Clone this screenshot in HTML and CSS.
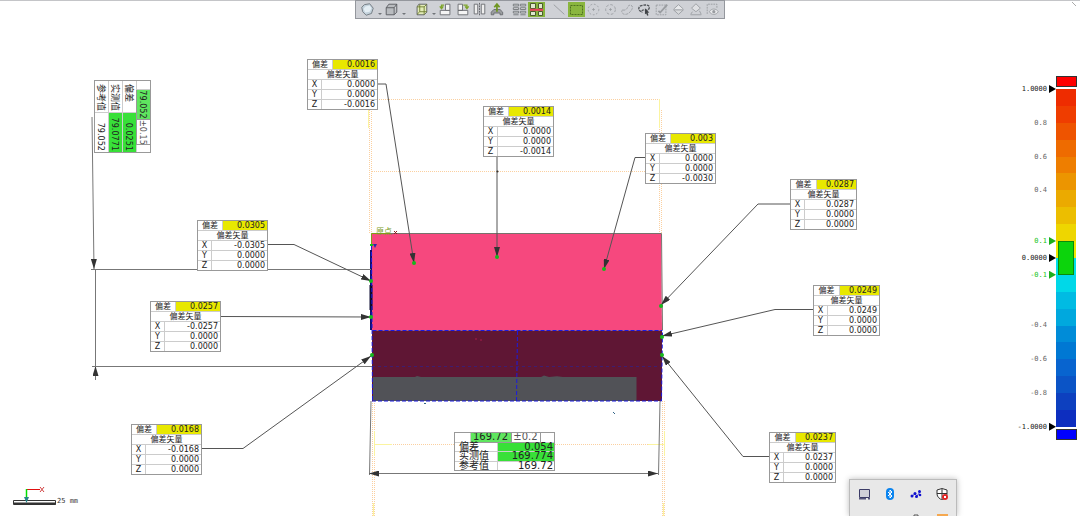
FILE: index.html
```
<!DOCTYPE html>
<html lang="zh-CN">
<head>
<meta charset="utf-8">
<title>偏差检测</title>
<link rel="stylesheet" href="styles.css">
</head>
<body>
<div class="app">
  <header class="toolbar" role="toolbar" aria-label="视图工具">
    <div class="group">
      <button class="tool" aria-label="着色"><svg viewBox="0 0 17 17"><path d="M5 3l6-1 4 5-2 6-6 2-4-4-1-5z" fill="#c3d2dc" stroke="#6d757c"/><path d="M6 5l5-1 2 3-2 4-5 1-2-4z" fill="#e4eef4"/></svg></button>
      <button class="drop" aria-label="着色选项"></button>
      <button class="tool" aria-label="视图"><svg viewBox="0 0 17 17"><path d="M2.500 6.500h9v8h-9zM2.500 6.500l3-4h9l-3 4M14.500 2.500v9l-3 3" fill="#b9bcc0" stroke="#55585c"/></svg></button>
      <button class="drop" aria-label="视图选项"></button>
    </div>
    <div class="group">
      <button class="tool" aria-label="剖切"><svg viewBox="0 0 17 17"><path d="M3.500 5.500l2-3h9v9l-3 3h-8z" fill="#e3ecb8" stroke="#55585c"/><path d="M3.500 5.500h8v9M11.500 5.500l3-3M6.500 3v8h8M6.500 11l-3 3" fill="none" stroke="#6a7a2c"/></svg></button>
      <button class="drop" aria-label="剖切选项"></button>
      <button class="tool" aria-label="左转"><svg viewBox="0 0 17 17"><path d="M2.500 9.500h11v5h-11z" fill="#f4f4f4" stroke="#66696d"/><path d="M8.500 2.500h5v7h-5z" fill="#f4f4f4" stroke="#66696d"/><path d="M7 3.500H4V7M2 5l2 2.500L6 5" fill="none" stroke="#7fa52b" stroke-width="1.500"/></svg></button>
      <button class="tool" aria-label="右转"><svg viewBox="0 0 17 17"><path d="M3.500 2.500h5v7h-5zM3.500 9.500h11v5h-11z" fill="#f4f4f4" stroke="#66696d"/><path d="M9.500 3.500h4V7M11.500 5l2 2.500L15.500 5" fill="none" stroke="#7fa52b" stroke-width="1.500"/></svg></button>
      <button class="tool" aria-label="镜像"><svg viewBox="0 0 17 17"><path d="M2.500 2.500h4v11h-4zM10.500 2.500h4v11h-4z" fill="#eee" stroke="#66696d"/><path d="M8.500 1v14" stroke="#55585c" stroke-dasharray="2 1"/></svg></button>
      <button class="tool" aria-label="投影"><svg viewBox="0 0 17 17"><path d="M2.500 14.500v-3l3-3h7l3 3v3h-3v-2h-7v2z" fill="#9a9da0" stroke="#66696d"/><path d="M9 11V3M6 6l3-3.500L12 6" fill="none" stroke="#6f9623" stroke-width="2"/></svg></button>
    </div>
    <div class="group">
      <button class="tool" aria-label="列表"><svg viewBox="0 0 17 17"><path d="M1.500 2.500h6v2h-6zM9.500 2.500h6v2h-6zM1.500 6.500h6v2h-6zM9.500 6.500h6v2h-6zM1.500 10.500h6v2h-6zM9.500 10.500h6v2h-6zM1.500 14.500h6M9.500 14.500h6" fill="#d9dadd" stroke="#707478"/></svg></button>
      <button class="tool" aria-label="对比" aria-pressed="true"><svg viewBox="0 0 17 17"><path d="M0 1h17v15H0z" fill="#86b43c"/><path d="M2.500 2.500h5v5h-5zM10.500 2.500h4v5h-4zM2.500 10.500h5v4h-5zM10.500 10.500h4v4h-4z" fill="#dfe8cd" stroke="#4c5d2d"/><path d="M2 8.800h13" stroke="#e8405c" stroke-width="2"/></svg></button>
    </div>
    <div class="group">
      <button class="tool" aria-label="直线选择"><svg viewBox="0 0 17 17"><path d="M2 3l12 11" stroke="#96999d"/></svg></button>
      <button class="tool" aria-label="矩形选择" aria-pressed="true"><svg viewBox="0 0 17 17"><path d="M0 1h17v15H0z" fill="#8ab63f"/><path d="M2.500 4.500h12v9h-12z" fill="none" stroke="#4f7120" stroke-dasharray="2 1"/></svg></button>
      <button class="tool" aria-label="圆形选择"><svg viewBox="0 0 17 17"><circle cx="8.500" cy="8.500" r="6" fill="none" stroke="#999ca0" stroke-dasharray="2 2"/><path d="M7 8.500h3M8.500 7v3" stroke="#999ca0"/></svg></button>
      <button class="tool" aria-label="椭圆选择"><svg viewBox="0 0 17 17"><circle cx="8.500" cy="8.500" r="5.500" fill="none" stroke="#999ca0" stroke-dasharray="3 2"/><path d="M7 8.500h3M8.500 7v3" stroke="#999ca0"/></svg></button>
      <button class="tool" aria-label="自由选择"><svg viewBox="0 0 17 17"><path d="M3 9c3 1 5-1 6-4 2-3 6-1 5 2s-4 7-8 7-5-4-3-5z" fill="none" stroke="#999ca0" stroke-dasharray="3 1"/></svg></button>
      <button class="tool" aria-label="套索"><svg viewBox="0 0 17 17"><path d="M5 11c-4-1-4-6 0-7s9-1 9 2-3 4-6 3c-2 0-3 1-2 3" fill="none" stroke="#505357" stroke-width="1.500" stroke-dasharray="3 1"/><path d="M9 7l5 5-2 .3 1 2.700-1.500.5-1-2.500L9 14z" fill="#404347"/></svg></button>
      <button class="tool" aria-label="画笔"><svg viewBox="0 0 17 17"><path d="M2.500 3.500h11v11h-11z" fill="none" stroke="#999ca0" stroke-dasharray="2 1"/><path d="M5 10l2 2 8-9" fill="none" stroke="#999ca0" stroke-width="2"/></svg></button>
      <button class="tool" aria-label="填充"><svg viewBox="0 0 17 17"><path d="M3 8l5.500-5L14 8" fill="#e8e9eb" stroke="#999ca0"/><path d="M3 9h11l-5.500 5z" fill="#d8dadc" stroke="#999ca0"/></svg></button>
      <button class="tool" aria-label="擦除"><svg viewBox="0 0 17 17"><path d="M4 7l5-5 5 5-5 4zM3 14.500h12M5 11l-2 3M13 10l2 4" fill="#dfe0e3" stroke="#999ca0"/></svg></button>
      <button class="tool" aria-label="可见性"><svg viewBox="0 0 17 17"><path d="M2.500 13.500v-11h11v4" fill="none" stroke="#999ca0" stroke-dasharray="2 1"/><path d="M5 11c2-4 8-4 10 0-2 4-8 4-10 0z" fill="#e8e9eb" stroke="#999ca0"/><circle cx="10" cy="11" r="1.800" fill="#999ca0"/></svg></button>
    </div>
  </header>

  <main class="stage">
    <svg class="scene" width="1080" height="516" viewBox="0 0 1080 516" role="img" aria-label="零件与标注引线">
      <defs>
        <marker id="tip" viewBox="0 0 10 6" refX="10" refY="3" markerWidth="10" markerHeight="6" markerUnits="userSpaceOnUse" orient="auto-start-reverse"><path d="M0 0L10 3L0 6z" fill="#333"/></marker>
      </defs>
      <g class="guides">
        <path d="M377 99.500H660M372 171.500H645M369.500 110V233M371.500 99V233M659.500 99V233M661.500 110V233M372.500 401V516M374.500 401V516M662.500 401V516M664.500 401V516M375 444.500H664"/>
        <path class="solid" d="M368.500 104V128M659.500 99V128M374.500 431V456M375 444.500H392M648 444.500H664M664.500 431V456M373.500 503V516M663.500 503V516"/>
      </g>
      <path d="M372 233.500H661L662 330.500H372z" fill="#f6487e"/>
      <path d="M372 330.500H662V401H372z" fill="#5f1634"/>
      <path d="M373 377H415l2-1 4 1H541l3-1.500 5 1.500 8-.8 6 .8H636.500V401H373z" fill="#515257"/>
      <path d="M371.500 233.500H661.500L662.500 330" fill="none" stroke="#77716c"/>
      <path d="M371 250V330" stroke="#101070" stroke-width="2"/>
      <path d="M371 285V310" stroke="#0a0a30" stroke-width="3"/>
      <path d="M372.500 330.500H662.500M371.500 240L372.500 401M372 401H661.500L662.500 331M517.500 331L516.500 401" fill="none" stroke="#1a1ae0" stroke-dasharray="4 2"/>
      <path d="M372 366.500H662" stroke="#31208a" stroke-dasharray="3 3" opacity=".7"/>
      <path d="M475 339h2M480 340h2" stroke="#a81c4a"/>
      <path d="M424 403.500h2M613 412l2 2" stroke="#368"/>
      <g class="dims">
        <path d="M92 117L94 269" marker-end="url(#tip)"/>
        <path d="M95.500 269V366"/>
        <path d="M95.500 380V366" marker-end="url(#tip)"/>
        <path d="M91 269.500H371M92 366.500H372"/>
        <path d="M371 401L369.500 475M660 401L658.500 475"/>
        <path d="M369 473.500H658" marker-start="url(#tip)" marker-end="url(#tip)"/>
      </g>
      <g class="leaders">
        <path d="M377 84H386L414 263"/>
        <path d="M497 155V257"/>
        <path d="M645 157.500H635L604 269"/>
        <path d="M790 204H758L661 305"/>
        <path d="M813 309.500H775L662 336"/>
        <path d="M769 456.500H743L662 356"/>
        <path d="M267 244.500H294L371 281"/>
        <path d="M220 316.500L371 317"/>
        <path d="M201 448.500H243L371 356"/>
      </g>
      <g fill="#17b81c">
        <circle cx="414" cy="263" r="2"/><circle cx="497" cy="257" r="2"/><circle cx="604" cy="269" r="2"/>
        <circle cx="661" cy="306" r="2"/><circle cx="662" cy="337" r="2"/><circle cx="662" cy="355" r="2"/>
        <circle cx="371" cy="281" r="2"/><circle cx="371" cy="317" r="2"/><circle cx="372" cy="355" r="2"/>
      </g>
      <circle cx="497.500" cy="171.500" r="1" fill="#333"/>
      <path d="M371.500 246V233.500H390" fill="none" stroke="#7ca018"/>
      <text class="origin" x="376" y="234">原点</text>
      <path d="M394 231l3 3M397 231l-3 3" stroke="#8c1c1c"/>
      <path d="M370 245h3" stroke="#17c81c" stroke-width="2"/>
      <path d="M373 244h4l-2 4z" fill="#2b2ba8"/>
      <path d="M13.500 500.500h42v4h-42z" fill="#fff" stroke="#333"/>
      <path d="M14 503.500h42" stroke="#333" stroke-width="2"/>
      <path d="M27 489.500H40" stroke="#e01010"/>
      <path d="M40 487l4 5M44 487l-4 5" stroke="#d04040"/>
      <path d="M26.500 489V499" stroke="#00e000" stroke-width="1.500"/>
      <path d="M24 497h5l-2.500 6z" fill="#27868a"/>
      <text class="scale-text" x="57" y="503">25 mm</text>
      <path d="M1072 2l4 4" stroke="#aaa"/>
    </svg>

    <table class="callout" style="left:307px;top:59px"><colgroup><col class="axis"><col class="gap"><col></colgroup><tr><th colspan="2">偏差</th><td class="warn">0.0016</td></tr><tr><th colspan="3">偏差矢量</th></tr><tr><th>X</th><td colspan="2">0.0000</td></tr><tr><th>Y</th><td colspan="2">0.0000</td></tr><tr><th>Z</th><td colspan="2">-0.0016</td></tr></table>
    <table class="callout" style="left:483px;top:106px"><colgroup><col class="axis"><col class="gap"><col></colgroup><tr><th colspan="2">偏差</th><td class="warn">0.0014</td></tr><tr><th colspan="3">偏差矢量</th></tr><tr><th>X</th><td colspan="2">0.0000</td></tr><tr><th>Y</th><td colspan="2">0.0000</td></tr><tr><th>Z</th><td colspan="2">-0.0014</td></tr></table>
    <table class="callout" style="left:645px;top:133px"><colgroup><col class="axis"><col class="gap"><col></colgroup><tr><th colspan="2">偏差</th><td class="warn">0.003</td></tr><tr><th colspan="3">偏差矢量</th></tr><tr><th>X</th><td colspan="2">0.0000</td></tr><tr><th>Y</th><td colspan="2">0.0000</td></tr><tr><th>Z</th><td colspan="2">-0.0030</td></tr></table>
    <table class="callout narrow" style="left:790px;top:179px"><colgroup><col class="axis"><col class="gap"><col></colgroup><tr><th colspan="2">偏差</th><td class="warn">0.0287</td></tr><tr><th colspan="3">偏差矢量</th></tr><tr><th>X</th><td colspan="2">0.0287</td></tr><tr><th>Y</th><td colspan="2">0.0000</td></tr><tr><th>Z</th><td colspan="2">0.0000</td></tr></table>
    <table class="callout narrow" style="left:813px;top:285px"><colgroup><col class="axis"><col class="gap"><col></colgroup><tr><th colspan="2">偏差</th><td class="warn">0.0249</td></tr><tr><th colspan="3">偏差矢量</th></tr><tr><th>X</th><td colspan="2">0.0249</td></tr><tr><th>Y</th><td colspan="2">0.0000</td></tr><tr><th>Z</th><td colspan="2">0.0000</td></tr></table>
    <table class="callout narrow" style="left:769px;top:432px"><colgroup><col class="axis"><col class="gap"><col></colgroup><tr><th colspan="2">偏差</th><td class="warn">0.0237</td></tr><tr><th colspan="3">偏差矢量</th></tr><tr><th>X</th><td colspan="2">0.0237</td></tr><tr><th>Y</th><td colspan="2">0.0000</td></tr><tr><th>Z</th><td colspan="2">0.0000</td></tr></table>
    <table class="callout" style="left:197px;top:220px"><colgroup><col class="axis"><col class="gap"><col></colgroup><tr><th colspan="2">偏差</th><td class="warn">0.0305</td></tr><tr><th colspan="3">偏差矢量</th></tr><tr><th>X</th><td colspan="2">-0.0305</td></tr><tr><th>Y</th><td colspan="2">0.0000</td></tr><tr><th>Z</th><td colspan="2">0.0000</td></tr></table>
    <table class="callout" style="left:150px;top:301px"><colgroup><col class="axis"><col class="gap"><col></colgroup><tr><th colspan="2">偏差</th><td class="warn">0.0257</td></tr><tr><th colspan="3">偏差矢量</th></tr><tr><th>X</th><td colspan="2">-0.0257</td></tr><tr><th>Y</th><td colspan="2">0.0000</td></tr><tr><th>Z</th><td colspan="2">0.0000</td></tr></table>
    <table class="callout" style="left:131px;top:424px"><colgroup><col class="axis"><col class="gap"><col></colgroup><tr><th colspan="2">偏差</th><td class="warn">0.0168</td></tr><tr><th colspan="3">偏差矢量</th></tr><tr><th>X</th><td colspan="2">-0.0168</td></tr><tr><th>Y</th><td colspan="2">0.0000</td></tr><tr><th>Z</th><td colspan="2">0.0000</td></tr></table>

    <table class="dimension width-dim">
      <colgroup><col class="w16"><col class="w27"><col class="w14"><col class="w29"><col></colgroup>
      <tr><td></td><td class="nominal" colspan="2">169.72</td><td class="tol">±0.2</td><td></td></tr>
      <tr><th colspan="2">偏差</th><td class="pass" colspan="3">0.054</td></tr>
      <tr><th colspan="2">实测值</th><td class="pass" colspan="3">169.774</td></tr>
      <tr><th colspan="2">参考值</th><td colspan="3">169.72</td></tr>
    </table>
    <table class="dimension height-dim">
      <colgroup><col class="w9"><col class="w23"><col class="w7"><col class="w25"><col></colgroup>
      <tr><td></td><td class="nominal" colspan="2">79.052</td><td class="tol">±0.15</td><td></td></tr>
      <tr><th colspan="2">偏差</th><td class="pass" colspan="3">0.0251</td></tr>
      <tr><th colspan="2">实测值</th><td class="pass" colspan="3">79.0771</td></tr>
      <tr><th colspan="2">参考值</th><td colspan="3">79.052</td></tr>
    </table>
  </main>

  <aside class="legend" aria-label="偏差色标">
    <div class="cap over"></div>
    <div class="scale">
      <ol class="ticks">
        <li class="mark">1.0000</li><li></li><li>0.8</li><li></li><li>0.6</li><li></li><li>0.4</li><li></li><li></li>
        <li class="mark tol-mark">0.1</li><li class="mark">0.0000</li><li class="mark tol-mark">-0.1</li>
        <li></li><li></li><li>-0.4</li><li></li><li>-0.6</li><li></li><li>-0.8</li><li></li><li class="mark">-1.0000</li>
      </ol>
      <div class="bar">
        <i style="background:#ee2c00"></i><i style="background:#ef3d00"></i><i style="background:#ee5400"></i><i style="background:#ee6b00"></i><i style="background:#ee7e00"></i><i style="background:#ec9500"></i><i style="background:#ebaa00"></i><i style="background:#ecbe00"></i><i style="background:#eed600"></i><i style="background:#f0e600"></i>
        <i style="background:#00e0ea"></i><i style="background:#00d8e8"></i><i style="background:#00bbe3"></i><i style="background:#00a8de"></i><i style="background:#008cd8"></i><i style="background:#0078d3"></i><i style="background:#0864cf"></i><i style="background:#0b54c6"></i><i style="background:#0d40bf"></i><i style="background:#0d2ebf"></i>
        <span class="tolerance"></span>
      </div>
    </div>
    <div class="cap under"></div>
  </aside>

  <aside class="tray" aria-label="系统托盘">
    <svg viewBox="0 0 12 12"><path d="M1.500 1.500h10v8h-10z" fill="#d0d0d8" stroke="#3b3b66"/><path d="M1 10.800h7M10 10.800h2" stroke="#55557a" stroke-width="1.500"/></svg>
    <svg viewBox="0 0 12 12"><rect x="2" y="0" width="8" height="12" rx="4" fill="#0a84ef"/><path d="M4 4l4 4-2 2V2l2 2-4 4" fill="none" stroke="#fff"/></svg>
    <svg viewBox="0 0 12 12"><path d="M2 8l3-2 2 2 3-4" fill="none" stroke="#4444d8"/><g fill="#1111d0"><circle cx="2" cy="8" r="1.500"/><circle cx="5" cy="5.500" r="1.500"/><circle cx="6.500" cy="8.500" r="1.500"/><circle cx="9.500" cy="3.500" r="1.500"/><circle cx="10" cy="7" r="1.300"/></g></svg>
    <svg viewBox="0 0 12 12"><path d="M1 2l5-1.500L11 2v4c0 3-3 5-5 6-2-1-5-3-5-6z" fill="#fff" stroke="#333"/><path d="M6 1v10M1 5.500h10" stroke="#333"/><circle cx="9" cy="9" r="3" fill="#e02525"/><path d="M8 8l2 2M10 8l-2 2" stroke="#fff"/></svg>
    <svg class="second" viewBox="0 0 12 12"><path d="M4 5V1h4v4" fill="none" stroke="#555"/></svg>
    <svg viewBox="0 0 12 12"><path d="M1 0h11v8H1z" fill="#f5a850"/></svg>
  </aside>
</div>
</body>
</html>
```
FILE: styles.css
```
* { box-sizing: border-box; }

body {
  margin: 0;
  background: #fff;
  font-family: "DejaVu Sans", "Noto Sans CJK SC", sans-serif;
}

.app {
  position: relative;
  display: flex;
  flex-direction: column;
  min-height: 100vh;
  overflow: hidden;
  box-shadow: inset 0 1px #c4c5c8;
}

/* Toolbar */
.toolbar {
  z-index: 1;
  align-self: center;
  display: flex;
  gap: 6px;
  padding: 0 3px;
  background: #cfd1d6;
  border: 1px solid #94979d;
}

.group { display: flex; }

.tool, .drop {
  display: flex;
  align-items: center;
  justify-content: center;
  height: 17px;
  padding: 0;
  border: 0;
  background: none;
}

.tool { width: 17px; }
.tool svg { width: 15px; height: 15px; }
.tool[aria-pressed] svg { width: 17px; height: 17px; }
.drop { width: 7px; }

.drop::after {
  content: "";
  margin-top: 8px;
  border: 2px solid transparent;
  border-top-color: #707478;
  border-bottom: 0;
}

/* Drawing */
.stage, .scene {
  position: absolute;
  top: 0;
  left: 0;
}

.guides path {
  fill: none;
  stroke: #fbd0a0;
  stroke-dasharray: 1 1;
}

.guides .solid {
  stroke: #fbf4a0;
  stroke-dasharray: none;
}

.dims path { fill: none; stroke: #777; }
.leaders path { fill: none; stroke: #555; marker-end: url(#tip); }

.origin {
  fill: #7c9c28;
  font-size: 8px;
}

.scale-text {
  fill: #333;
  font-family: "DejaVu Sans Mono", monospace;
  font-size: 7px;
}

/* Deviation callouts */
.callout, .dimension {
  position: absolute;
  table-layout: fixed;
  border-collapse: collapse;
  background: #fff;
  outline: 1px solid #999;
  outline-offset: -1px;
  color: #222;
}

.callout {
  width: 71px;
  height: 50px;
  font-size: 8px;
  line-height: 8px;
}

.narrow { width: 67px; }
.axis { width: 14px; }
.gap { width: 11px; }
.narrow .gap { width: 12px; }

th, td {
  padding: 0;
  border: 1px solid #ccc;
  font-weight: normal;
  white-space: nowrap;
}

td { text-align: right; }
.callout th, .callout td { padding-top: 1px; }
.callout td { padding-right: 2px; }
.callout .warn { background: #e8e800; }

/* Dimension tables */
.w7 { width: 7px; }
.w9 { width: 9px; }
.w14 { width: 14px; }
.w16 { width: 16px; }
.w23 { width: 23px; }
.w25 { width: 25px; }
.w27 { width: 27px; }
.w29 { width: 29px; }

.dimension th { padding-left: 4px; text-align: left; }
.dimension td { padding-right: 1px; }
.dimension .tol { border-color: #999; color: #555; text-align: center; }
.dimension .nominal { background: #5fe65f; border-color: #999; text-align: center; }
.dimension .pass { background: #38e038; }

.width-dim {
  top: 432px;
  left: 454px;
  width: 101px;
  height: 39px;
  font-size: 10px;
  line-height: 8px;
}

.height-dim {
  top: 80px;
  left: 151px;
  width: 73px;
  height: 57px;
  font-family: "DejaVu Sans Condensed", "DejaVu Sans", "Noto Sans CJK SC", sans-serif;
  font-size: 9px;
  line-height: 12px;
  transform: rotate(90deg);
  transform-origin: 0 0;
}

.height-dim th { padding-left: 3px; }
.height-dim .nominal, .height-dim .tol { padding: 0; }

/* Colour legend */
.legend {
  z-index: 1;
  align-self: flex-end;
  display: flex;
  flex-direction: column;
  align-items: flex-end;
  gap: 2px;
  margin: 57px 3px 0 0;
}

.cap {
  width: 21px;
  height: 11px;
  border: 1px solid #333;
}

.over { background: #f00; }
.under { background: #00f; }

.scale {
  display: flex;
  height: 338px;
  padding-right: 1px;
}

.ticks {
  display: flex;
  flex-direction: column;
  justify-content: space-between;
  margin: 0;
  padding: 0;
  list-style: none;
  color: #666;
  font-family: "DejaVu Sans Mono", monospace;
  font-size: 7px;
  line-height: 8px;
}

.ticks li {
  display: flex;
  align-items: center;
  justify-content: flex-end;
  height: 0;
  padding-right: 9px;
}

.ticks .mark { gap: 2px; padding-right: 0; color: #222; }

.mark::after {
  content: "";
  width: 7px;
  height: 8px;
  background: #000;
  clip-path: polygon(0 0, 100% 50%, 0 100%);
}

.ticks .tol-mark { color: #22c422; }
.tol-mark::after { background: #1cae1c; }

.bar {
  position: relative;
  display: grid;
  grid-template-rows: repeat(20, 1fr);
  width: 20px;
}

.tolerance {
  position: absolute;
  inset: 45% 2px;
  background: #0cd40c;
  border: 1px solid #0a8a0a;
}

/* System tray flyout */
.tray {
  position: absolute;
  bottom: 0;
  left: 849px;
  z-index: 1;
  display: grid;
  grid-template-columns: repeat(4, 12px);
  gap: 14px;
  width: 108px;
  height: 37px;
  padding: 8px 0 0 8px;
  overflow: hidden;
  background: #e8e8e8;
  border: 1px solid #bbb;
  border-bottom: 0;
  box-shadow: 0 0 6px #0004;
}

.tray svg { width: 12px; height: 12px; }
.tray .second { grid-column: 3; }
```
